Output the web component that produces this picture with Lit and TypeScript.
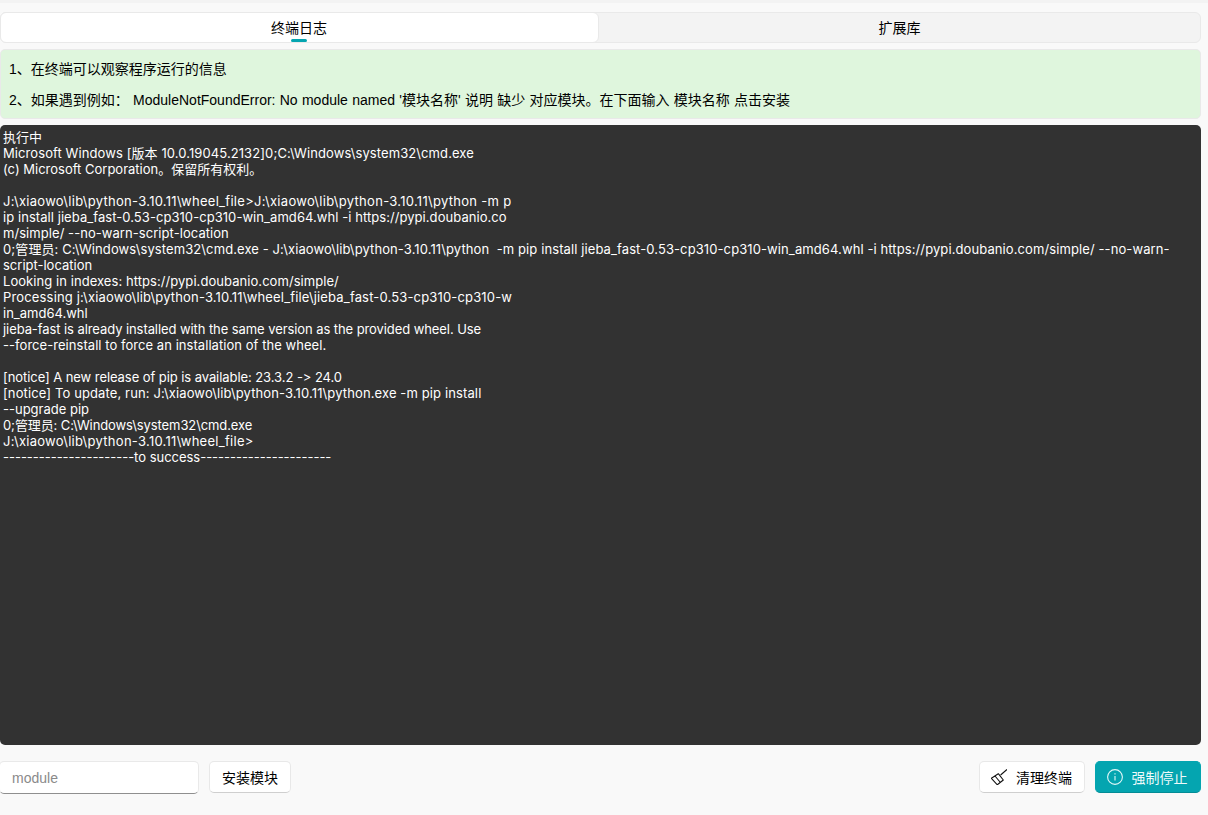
import { LitElement, html, css } from "lit";
import { customElement } from "lit/decorators.js";
import { styleMap } from "lit/directives/style-map.js";

/* Each log line with the tracking (px) that fits its width to the reference. */
const LOG: [string, number][] = [
  ["执行中", 0],
  ["Microsoft Windows [版本 10.0.19045.2132]0;C:\\Windows\\system32\\cmd.exe", 0.09],
  ["(c) Microsoft Corporation。保留所有权利。", 0],
  ["", 0],
  ["J:\\xiaowo\\lib\\python-3.10.11\\wheel_file>J:\\xiaowo\\lib\\python-3.10.11\\python -m p", 0.29],
  ["ip install jieba_fast-0.53-cp310-cp310-win_amd64.whl -i https://pypi.doubanio.co", 0.06],
  ["m/simple/ --no-warn-script-location", 0.06],
  ["0;管理员: C:\\Windows\\system32\\cmd.exe - J:\\xiaowo\\lib\\python-3.10.11\\python  -m pip install jieba_fast-0.53-cp310-cp310-win_amd64.whl -i https://pypi.doubanio.com/simple/ --no-warn-", 0.1],
  ["script-location", 0],
  ["Looking in indexes: https://pypi.doubanio.com/simple/", 0.06],
  ["Processing j:\\xiaowo\\lib\\python-3.10.11\\wheel_file\\jieba_fast-0.53-cp310-cp310-w", 0.16],
  ["in_amd64.whl", 0],
  ["jieba-fast is already installed with the same version as the provided wheel. Use", -0.08],
  ["--force-reinstall to force an installation of the wheel.", 0.05],
  ["", 0],
  ["[notice] A new release of pip is available: 23.3.2 -> 24.0", -0.07],
  ["[notice] To update, run: J:\\xiaowo\\lib\\python-3.10.11\\python.exe -m pip install", 0.12],
  ["--upgrade pip", 0],
  ["0;管理员: C:\\Windows\\system32\\cmd.exe", -0.1],
  ["J:\\xiaowo\\lib\\python-3.10.11\\wheel_file>", 0.28],
  ["----------------------to success----------------------", -0.02],
];

@customElement("app-root")
export class AppRoot extends LitElement {
  static styles = css`
    :host {
      display: flex;
      flex-direction: column;
      box-sizing: border-box;
      height: 815px;
      background: #f9f9f9;
      border-top: 3px solid #f3f3f3;
      padding: 9px 7px 0 0;
      font-family: "Liberation Sans", "Noto Sans CJK SC", sans-serif;
      font-size: 14px;
      color: #000;
    }
    .tabs {
      display: flex;
      height: 31px;
      box-sizing: border-box;
      background: #f3f3f3;
      border: 1px solid #e9e9e9;
      border-radius: 6px;
    }
    .tab {
      flex: 1;
      position: relative;
      display: flex;
      align-items: center;
      justify-content: center;
      border-radius: 6px;
      margin: -1px 0;
      padding: 0 0 2px 0;
    }
    .tab.active {
      flex: 0 0 599px;
      box-sizing: border-box;
      padding: 0 1px 2px 0;
      background: #fff;
      border: 1px solid #e9e9e9;
      margin: -1px 0 -1px -1px;
    }
    .marker {
      position: absolute;
      bottom: 0;
      left: 50%;
      margin-left: -9px;
      width: 16px;
      height: 3px;
      border-radius: 2px;
      background: #04a5b0;
    }
    .info {
      margin-top: 6px;
      height: 70px;
      box-sizing: border-box;
      background: #dff6dd;
      border: 1px solid #e9e9e9;
      border-radius: 5px;
      padding: 0 8px;
      word-spacing: 0.4px;
      display: flex;
      flex-direction: column;
      justify-content: center;
      gap: 15px;
      line-height: 16px;
    }
    .term {
      margin-top: 6px;
      height: 620px;
      box-sizing: border-box;
      background: #323232;
      border-radius: 5px;
      padding: 4px 3px;
      color: #fff;
      font-family: "Inter", "Noto Sans CJK SC", sans-serif;
      font-size: 13px;
      line-height: 16px;
      font-variant-ligatures: none;
      font-feature-settings: "calt" 0;
      overflow: hidden;
    }
    .line {
      white-space: pre;
      min-height: 16px;
    }
    .bar {
      margin-top: 16px;
      display: flex;
      align-items: flex-start;
    }
    .input {
      width: 200px;
      margin-left: -1px;
      height: 33px;
      box-sizing: border-box;
      background: #fff;
      border: 1px solid #e9e9e9;
      border-bottom: 1px solid #8f8f8f;
      border-radius: 5px;
      padding: 0 12px;
      display: flex;
      align-items: center;
      color: #8a8a8a;
    }
    .btn {
      height: 32px;
      box-sizing: border-box;
      background: #fff;
      border: 1px solid #e8e8e8;
      border-bottom-color: #cfcfcf;
      border-radius: 5px;
      display: flex;
      align-items: center;
      justify-content: center;
    }
    .install { width: 82px; margin-left: 10px; }
    .spacer { flex: 1; }
    .clear { width: 106px; gap: 9px; padding-right: 1px; }
    .stop {
      width: 106px;
      margin-left: 10px;
      gap: 9px;
      padding-right: 2px;
      background: #04a5b0;
      border: 1px solid #04a5b0;
      border-bottom-color: #048c95;
      color: #eefafb;
    }
    svg { display: block; flex: none; }
  `;

  render() {
    return html`
      <div class="tabs">
        <div class="tab active">终端日志<span class="marker"></span></div>
        <div class="tab">扩展库</div>
      </div>
      <div class="info">
        <div>1、在终端可以观察程序运行的信息</div>
        <div>2、如果遇到例如： ModuleNotFoundError: No module named '模块名称' 说明 缺少 对应模块。在下面输入 模块名称 点击安装</div>
      </div>
      <div class="term">
        ${LOG.map(
          ([text, track]) =>
            html`<div class="line" style=${styleMap({ letterSpacing: `${track}px` })}>${text}</div>`
        )}
      </div>
      <div class="bar">
        <div class="input">module</div>
        <div class="btn install">安装模块</div>
        <div class="spacer"></div>
        <div class="btn clear">
          <svg width="16" height="16" viewBox="0 0 16 16" fill="none" stroke="#111" stroke-width="1.1" stroke-linejoin="round">
            <path d="M16 .4 9.6 6M7.3 4.7 12.3 11 6.3 15.8 .4 9.3ZM4 7 9 13" />
          </svg>
          清理终端
        </div>
        <div class="btn stop">
          <svg width="16" height="16" viewBox="0 0 16 16" fill="none" stroke="#e4f7f8" stroke-width="1.1">
            <circle cx="8" cy="8" r="7.4" />
            <path d="M8 7v4.5M8 4.2v1.4" />
          </svg>
          强制停止
        </div>
      </div>
    `;
  }
}
